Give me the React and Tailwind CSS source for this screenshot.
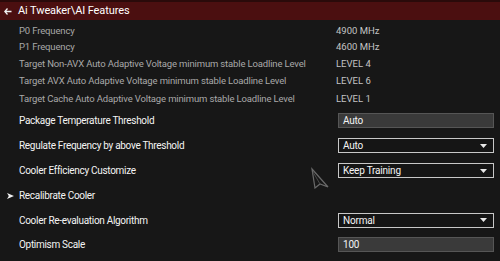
import React from "react";

const font = { fontFamily: 'Roboto, "Noto Sans", sans-serif' };

function Caret() {
  return (
    <svg width="7" height="4" viewBox="0 0 7 4" className="shrink-0">
      <polygon points="0,0 7,0 3.5,4" fill="#e8e8e8" />
    </svg>
  );
}

function Info({ label, value, h }) {
  return (
    <div className={`flex items-center ${h}`}>
      <div className="w-[336px] pl-[19px] text-[9.5px] tracking-[-0.15px] text-[#a9a9a9]">{label}</div>
      <div className="text-[9.5px] text-[#c4c4c4]">{value}</div>
    </div>
  );
}

function Setting({ label, h, children, arrow }) {
  return (
    <div className={`flex items-center ${h}`}>
      <div className="w-[338px] flex items-center text-[10px] tracking-[-0.3px] text-[#f4f4f4]">
        <div className="w-[19px] flex justify-center pl-[2px]">
          {arrow && (
            <svg width="7" height="6" viewBox="0 0 7 6">
              <polygon points="0,0 7,3 0,6 1.8,3" fill="#f0f0f0" />
            </svg>
          )}
        </div>
        <span>{label}</span>
      </div>
      {children}
    </div>
  );
}

function Input({ value }) {
  return (
    <div className="w-[156px] h-[15px] bg-[#3a3a3a] border border-[#565656] flex items-center pl-[4px] text-[10px] tracking-[-0.2px] text-[#f4f4f4]">
      {value}
    </div>
  );
}

function Select({ value }) {
  return (
    <div className="w-[156px] h-[15px] bg-[#151515] border border-[#c8c8c8] flex items-center justify-between pl-[4px] pr-[6px] text-[10px] tracking-[-0.2px] text-[#f4f4f4]">
      <span>{value}</span>
      <Caret />
    </div>
  );
}

export default function App() {
  return (
    <div className="w-[500px] h-[261px] bg-[#171717] overflow-hidden relative" style={font}>
      <div className="h-[20px] bg-[#4b0f10] border-t-2 border-[#2a0a0a] flex items-center text-[11px] text-white">
        <div className="w-[18px] flex items-center pl-[4px]">
          <svg width="8" height="7" viewBox="0 0 8 7">
            <path d="M3.5 0.5 L0.8 3.5 L3.5 6.5 M0.8 3.5 H7.5" fill="none" stroke="#f2f2f2" strokeWidth="1.3" />
          </svg>
        </div>
        <span className="tracking-[-0.1px]">Ai Tweaker\AI Features</span>
      </div>
      <div className="pt-[3px] flex flex-col">
        <Info h="h-[16px]" label="P0 Frequency" value="4900 MHz" />
        <Info h="h-[17px]" label="P1 Frequency" value="4600 MHz" />
        <Info h="h-[17px]" label="Target Non-AVX Auto Adaptive Voltage minimum stable Loadline Level" value="LEVEL 4" />
        <Info h="h-[17px]" label="Target AVX Auto Adaptive Voltage minimum stable Loadline Level" value="LEVEL 6" />
        <Info h="h-[18px]" label="Target Cache Auto Adaptive Voltage minimum stable Loadline Level" value="LEVEL 1" />
        <Setting h="h-[25px]" label="Package Temperature Threshold"><Input value="Auto" /></Setting>
        <Setting h="h-[25px]" label="Regulate Frequency by above Threshold"><Select value="Auto" /></Setting>
        <Setting h="h-[25px]" label="Cooler Efficiency Customize"><Select value="Keep Training" /></Setting>
        <Setting h="h-[25px]" label="Recalibrate Cooler" arrow />
        <Setting h="h-[24px]" label="Cooler Re-evaluation Algorithm"><Select value="Normal" /></Setting>
        <Setting h="h-[25px]" label="Optimism Scale"><Input value="100" /></Setting>
      </div>
      <svg className="absolute left-[310px] top-[167px]" width="20" height="22" viewBox="0 0 20 22">
        <polygon points="2,2 18,20 10,17 5,21" fill="none" stroke="#6a6a6a" strokeWidth="1.2" />
        <polyline points="3,5 10,17" fill="none" stroke="#4a4a4a" strokeWidth="1" />
      </svg>
    </div>
  );
}
